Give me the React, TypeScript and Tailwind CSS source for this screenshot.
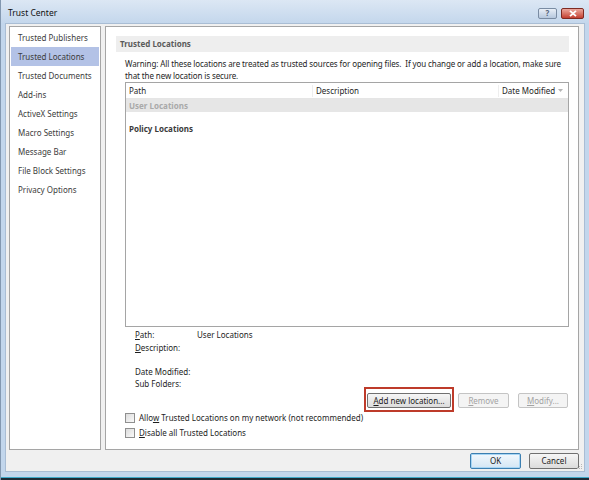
import React from 'react';

const navItems = [
  'Trusted Publishers',
  'Trusted Locations',
  'Trusted Documents',
  'Add-ins',
  'ActiveX Settings',
  'Macro Settings',
  'Message Bar',
  'File Block Settings',
  'Privacy Options',
];

const font = { fontFamily: '"Noto Sans", "Liberation Sans", sans-serif' };

const Btn = ({
  children,
  disabled,
  className = '',
}: {
  children: React.ReactNode;
  disabled?: boolean;
  className?: string;
}) => (
  <div
    className={`h-[15px] flex items-center justify-center rounded-[2px] border text-[8px] leading-none ${
      disabled
        ? 'border-[#c4c4c4] bg-[#f4f4f4] text-[#a3a3a3]'
        : 'border-[#707070] bg-gradient-to-b from-[#f6f6f6] to-[#dcdcdc] text-[#1b1b1b]'
    } ${className}`}
  >
    {children}
  </div>
);

const Check = ({ children }: { children: React.ReactNode }) => (
  <div className="h-[14px] flex items-center gap-[4px]">
    <div className="size-[10px] border border-[#8f8f8f] bg-gradient-to-br from-[#dcdcdc] to-[#fafafa]" />
    <span className="text-[8px] text-[#1e1e1e]">{children}</span>
  </div>
);

export default function App() {
  return (
    <div
      className="w-[589px] h-[480px] flex flex-col bg-[#c2d6ec] border-l border-[#8398b0] overflow-hidden"
      style={font}
    >
      {/* title bar */}
      <div className="h-[23px] flex items-center pl-[7px] pr-[5px] bg-gradient-to-b from-[#dce7f4] to-[#c4d7ec]">
        <span className="pt-[3px] text-[8.5px] text-[#111]">Trust Center</span>
        <div className="ml-auto flex items-start gap-[4px] pt-[3px]">
          <div className="w-[19px] h-[11px] rounded-[2px] border border-[#7a8ca3] bg-gradient-to-b from-[#e9eff7] to-[#b6c8de] flex items-center justify-center text-[8px] leading-none font-bold text-[#56657a]">
            ?
          </div>
          <div className="w-[23px] h-[11px] rounded-[2px] border border-[#7e2a22] bg-gradient-to-b from-[#eba79d] to-[#c23d30] flex items-center justify-center">
            <svg width="8" height="7" viewBox="0 0 8 7">
              <path d="M1 0.8 L7 6.2 M7 0.8 L1 6.2" stroke="#fff" strokeWidth="1.8" />
            </svg>
          </div>
        </div>
      </div>

      {/* client area */}
      <div className="relative mx-[4px] flex-1 flex flex-col bg-[#f0f0f0] border border-[#a9bdd4]">
        <div className="flex gap-[4px] pt-[2px] pl-[3px] pr-[5px]">
          {/* nav */}
          <div className="w-[92px] h-[424px] bg-white border border-[#a5a5a5] pt-[1px] px-[1px]">
            {navItems.map((n) => (
              <div
                key={n}
                className={`h-[19px] flex items-center pl-[7px] text-[8px] text-[#3c3c3c] ${
                  n === 'Trusted Locations' ? 'bg-[#b3c2e6]' : ''
                }`}
              >
                {n}
              </div>
            ))}
          </div>

          {/* main panel */}
          <div className="flex-1 h-[424px] bg-white border border-[#a5a5a5] flex flex-col">
            <div className="mt-[9px] ml-[10px] mr-[9px] h-[16px] bg-[#eeeeee] flex items-center pl-[4px] text-[8px] font-bold text-[#5a5a5a]">
              Trusted Locations
            </div>
            <div className="mt-[6px] ml-[19px] mr-[9px] text-[8px] leading-[12px] tracking-[-0.1px] text-[#1e1e1e] whitespace-nowrap">
              <div>
                Warning: All these locations are treated as trusted sources for opening files.&nbsp; If you change or add
                a location, make sure
              </div>
              <div>that the new location is secure.</div>
            </div>

            {/* list */}
            <div className="ml-[19px] mr-[9px] h-[245px] border border-[#a5a5a5] flex flex-col text-[8px]">
              <div className="h-[16px] flex items-center border-b border-[#e5e5e5] text-[#1e1e1e]">
                <div className="w-[187px] pl-[3px] border-r border-[#eeeeee]">Path</div>
                <div className="w-[186px] pl-[3px] border-r border-[#eeeeee]">Description</div>
                <div className="flex-1 pl-[3px] flex items-center gap-[3px]">
                  Date Modified
                  <svg width="5" height="3" viewBox="0 0 5 3">
                    <path d="M0 0 H5 L2.5 3 Z" fill="#b5b5b5" />
                  </svg>
                </div>
              </div>
              <div className="h-[13px] bg-[#e6e6e6] flex items-center pl-[3px] font-bold text-[#a9a9a9]">
                User Locations
              </div>
              <div className="mt-[10px] h-[13px] flex items-center pl-[3px] font-bold text-[#3a3a3a]">
                Policy Locations
              </div>
            </div>

            {/* details */}
            <div className="mt-[2px] ml-[29px] text-[8px] text-[#1e1e1e]">
              <div className="h-[12px] flex items-center">
                <span className="w-[62px]">
                  <span className="underline">P</span>ath:
                </span>
                <span>User Locations</span>
              </div>
              <div className="h-[13px] flex items-center">
                <span>
                  <span className="underline">D</span>escription:
                </span>
              </div>
              <div className="h-[11px]" />
              <div className="h-[13px] flex items-center">Date Modified:</div>
              <div className="h-[12px] flex items-center">Sub Folders:</div>
            </div>

            {/* buttons */}
            <div className="mt-[3px] mr-[10px] flex justify-end">
              <div className="relative">
                <Btn className="w-[84px]">
                  <span>
                    <span className="underline">A</span>dd new location...
                  </span>
                </Btn>
                <div className="absolute -left-[3px] -right-[3px] -top-[6px] -bottom-[4px] border-2 border-[#be3b2a]" />
              </div>
              <Btn disabled className="w-[51px] ml-[7px]">
                <span>
                  <span className="underline">R</span>emove
                </span>
              </Btn>
              <Btn disabled className="w-[50px] ml-[9px]">
                <span>
                  <span className="underline">M</span>odify...
                </span>
              </Btn>
            </div>

            {/* checkboxes */}
            <div className="mt-[3px] ml-[19px] flex flex-col gap-[1px]">
              <Check>
                Allo<span className="underline">w</span> Trusted Locations on my network (not recommended)
              </Check>
              <Check>
                <span className="underline">D</span>isable all Trusted Locations
              </Check>
            </div>
          </div>
        </div>

        {/* OK / Cancel */}
        <div className="mt-[3px] pr-[5px] flex justify-end gap-[8px]">
          <div className="w-[51px] h-[16px] rounded-[2px] border border-[#3c7fb1] bg-gradient-to-b from-[#f2f8fd] to-[#d4e6f4] flex items-center justify-center text-[8px] text-[#1b1b1b] shadow-[inset_0_0_0_1px_#a8d6f5]">
            OK
          </div>
          <div className="w-[50px] h-[16px] rounded-[2px] border border-[#707070] bg-gradient-to-b from-[#f6f6f6] to-[#dcdcdc] flex items-center justify-center text-[8px] text-[#1b1b1b]">
            Cancel
          </div>
        </div>

        {/* resize grip */}
        <svg className="absolute right-[1px] bottom-[1px]" width="6" height="6" viewBox="0 0 6 6">
          <rect x="4" y="0" width="1" height="1" fill="#b8b8b8" />
          <rect x="2" y="2" width="1" height="1" fill="#b8b8b8" />
          <rect x="4" y="2" width="1" height="1" fill="#b8b8b8" />
          <rect x="0" y="4" width="1" height="1" fill="#b8b8b8" />
          <rect x="2" y="4" width="1" height="1" fill="#b8b8b8" />
          <rect x="4" y="4" width="1" height="1" fill="#b8b8b8" />
        </svg>
      </div>

      <div className="h-[5px]" />
      <div className="h-[1px] bg-[#3fa9c9]" />
      <div className="h-[2px] bg-[#1d2b36]" />
    </div>
  );
}
